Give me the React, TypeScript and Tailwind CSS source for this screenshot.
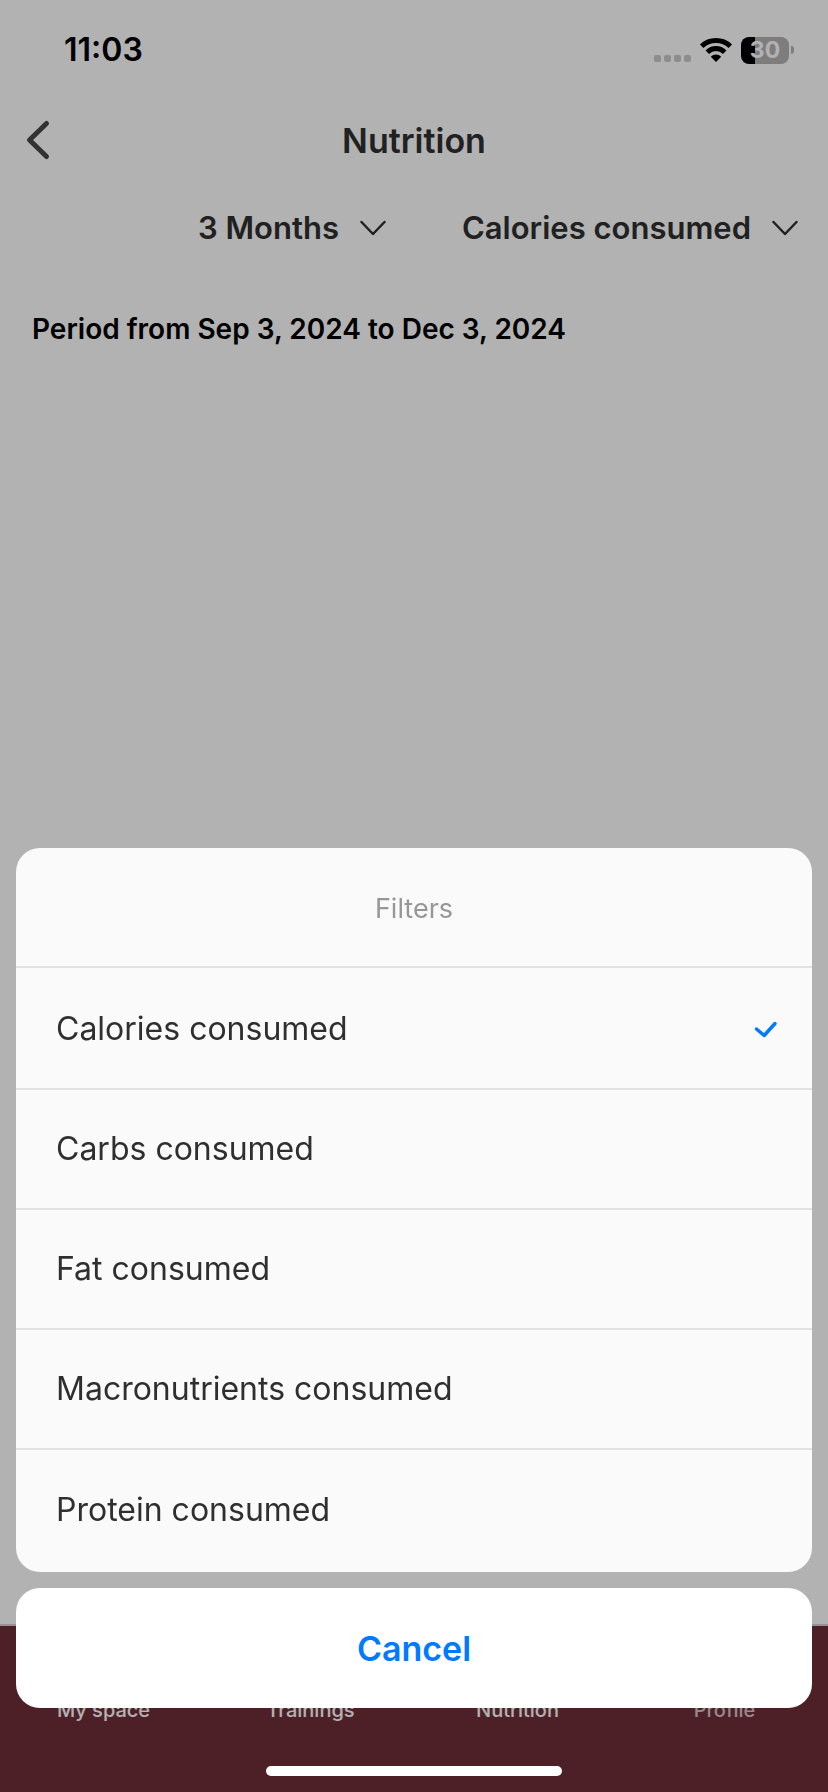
import { useState } from "react";

const FILTERS = [
    "Calories consumed",
    "Carbs consumed",
    "Fat consumed",
    "Macronutrients consumed",
    "Protein consumed",
];

const TABS = [
    { name: "My space", color: "text-white" },
    { name: "Trainings", color: "text-white" },
    { name: "Nutrition", color: "text-white" },
    { name: "Profile", color: "text-[#d8c4c6]" },
];

export default function App() {
    const [filter, setFilter] = useState("Calories consumed");
    const [open, setOpen] = useState(true);

    return (
        <div className="min-h-screen flex flex-col bg-white text-[#303030] font-['Inter',sans-serif]">
            <StatusBar />

            {/* Header */}
            <header className="h-20 px-6 grid grid-cols-[1fr_auto_1fr] items-center">
                <button aria-label="Back" className="justify-self-start">
                    <svg width="28" height="44" viewBox="0 0 28 44" fill="none" stroke="#484848" strokeWidth="5" strokeLinecap="round" strokeLinejoin="round">
                        <path d="M22.5 5.5L5.5 22l17 16.5" />
                    </svg>
                </button>
                <h1 className="text-[34px] font-semibold">Nutrition</h1>
            </header>

            {/* Period and filter pickers */}
            <div className="h-24 pr-[30px] flex justify-end items-center gap-[76px]">
                <Picker label="3 Months" />
                <Picker label={filter} onClick={() => setOpen(true)} />
            </div>

            <main className="flex-1 px-8 pt-8">
                <h2 className="text-[28px] leading-[42px] font-semibold text-black">Period from Sep 3, 2024 to Dec 3, 2024</h2>
            </main>

            {/* Tab bar */}
            <nav className="h-[168px] border-t-2 border-[#d4d4d4] bg-[#6f2e3a] grid grid-cols-4 items-start">
                {TABS.map(tab => (
                    <a key={tab.name} href="#" className={`pt-[70px] text-center text-[20px] leading-7 font-medium ${tab.color}`}>
                        {tab.name}
                    </a>
                ))}
            </nav>

            {open && (
                <>
                    <div className="fixed inset-0 bg-black/30" />
                    <div role="dialog" aria-label="Filters" className="fixed inset-x-4 bottom-[84px] flex flex-col gap-4">
                        <fieldset className="rounded-3xl bg-[#fafafa] overflow-hidden">
                            <div className="h-[120px] pt-1 border-b-2 border-[#e2e2e2] flex items-center justify-center text-[27px] text-[#979797]">
                                Filters
                            </div>
                            <div className="py-0.5 divide-y-2 divide-[#e2e2e2]">
                                {FILTERS.map(name => (
                                    <label key={name} className="h-[120px] pl-10 pr-[34px] flex items-center justify-between text-[32px] text-[#2f2f2f]">
                                        <input type="radio" name="filter" checked={filter === name} onChange={() => setFilter(name)} className="sr-only" />
                                        {name}
                                        {filter === name && <Check />}
                                    </label>
                                ))}
                            </div>
                        </fieldset>
                        <button onClick={() => setOpen(false)} className="h-[120px] rounded-3xl bg-white text-[34px] font-semibold text-[#007aff]">
                            Cancel
                        </button>
                    </div>
                </>
            )}

            {/* Home indicator */}
            <div className="fixed bottom-4 left-1/2 -translate-x-1/2 w-[296px] h-[10px] rounded-full bg-white" />
        </div>
    );
}

function StatusBar() {
    return (
        <div className="h-[100px] pl-16 pr-[34px] flex items-center justify-between text-black">
            <span className="text-[32px] font-semibold">11:03</span>
            <div className="flex items-center">
                <div className="mt-4 mr-2 flex gap-[3px]">
                    {[0, 1, 2, 3].map(i => (
                        <span key={i} className="w-[7px] h-[7px] rounded-xs bg-[#cbcbcb]" />
                    ))}
                </div>
                <svg width="34" height="26" viewBox="0 0 34 26" className="mr-2" fill="none" stroke="#000" strokeWidth="5">
                    <path d="M2.7 9.3C10.5 1.6 23.5 1.6 31.3 9.3" />
                    <path d="M8.3 15.2C13.2 10.4 20.8 10.4 25.7 15.2" />
                    <path d="M17 25l-5.2-5.3c3-2.8 7.4-2.8 10.4 0z" fill="#000" stroke="none" />
                </svg>
                <div className="w-12 h-[27px] rounded-lg bg-linear-to-r from-black from-30% to-[#b4b4b4] to-30% flex items-center justify-center text-[23px] leading-none font-bold text-white">
                    30
                </div>
                <span className="ml-[2px] w-[3px] h-2 rounded-r-full bg-[#b4b4b4]" />
            </div>
        </div>
    );
}

function Picker({ label, onClick }: { label: string; onClick?: () => void }) {
    return (
        <button onClick={onClick} aria-haspopup="dialog" className="flex items-center gap-[21px] text-[31px] font-semibold">
            {label}
            <svg width="26" height="16" viewBox="0 0 26 16" fill="none" stroke="#303030" strokeWidth="2.5" strokeLinecap="round" strokeLinejoin="round">
                <path d="M1.5 2L13 14 24.5 2" />
            </svg>
        </button>
    );
}

function Check() {
    return (
        <svg width="24" height="18" viewBox="0 0 24 18" fill="none" stroke="#007aff" strokeWidth="3.5" strokeLinecap="round" strokeLinejoin="round">
            <path d="M2.5 9L10.2 15.5 21 3.5" />
        </svg>
    );
}
